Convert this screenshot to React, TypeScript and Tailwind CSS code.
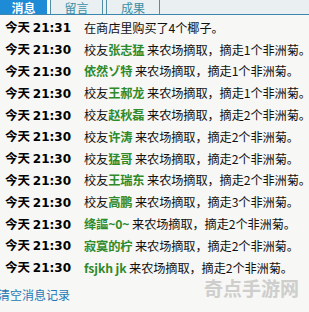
const rows: { time: string; prefix?: string; name?: string; text: string }[] = [
  { time: "21:31", text: "在商店里购买了4个椰子。" },
  { time: "21:30", prefix: "校友", name: "张志猛", text: " 来农场摘取，摘走1个非洲菊。" },
  { time: "21:30", name: "依然ゾ特", text: " 来农场摘取，摘走1个非洲菊。" },
  { time: "21:30", prefix: "校友", name: "王郝龙", text: " 来农场摘取，摘走1个非洲菊。" },
  { time: "21:30", prefix: "校友", name: "赵秋磊", text: " 来农场摘取，摘走2个非洲菊。" },
  { time: "21:30", prefix: "校友", name: "许涛", text: " 来农场摘取，摘走2个非洲菊。" },
  { time: "21:30", prefix: "校友", name: "猛哥", text: " 来农场摘取，摘走2个非洲菊。" },
  { time: "21:30", prefix: "校友", name: "王瑞东", text: " 来农场摘取，摘走2个非洲菊。" },
  { time: "21:30", prefix: "校友", name: "高鹏", text: " 来农场摘取，摘走3个非洲菊。" },
  { time: "21:30", name: "绛謳~0~", text: " 来农场摘取，摘走2个非洲菊。" },
  { time: "21:30", name: "寂寞的柠", text: " 来农场摘取，摘走2个非洲菊。" },
  { time: "21:30", name: "fsjkh jk", text: " 来农场摘取，摘走2个非洲菊。" },
];

const cjk = "font-['Noto_Sans_CJK_SC',sans-serif]";

export default function App() {
  return (
    <div className="relative h-[312px] w-[309px] overflow-hidden bg-[#f7f7f5]">
      {/* tabs */}
      <div className={`flex h-[15px] items-stretch border-b border-[#3d86ad] bg-[#eaf0f1] text-[12px] leading-[13px] ${cjk}`}>
        <div className="flex w-[47px] items-center justify-center bg-[#1d8bd6] font-bold text-white">消息</div>
        <div className="w-[3px] bg-white" />
        <div className="flex w-[53px] items-center justify-center border-l border-r border-[#4f8ea3] text-[#3b8fa6]">留言</div>
        <div className="w-[3px]" />
        <div className="flex w-[54px] items-center justify-center border-l border-r border-[#4f8ea3] text-[#3b8fa6]">成果</div>
        <div className="flex-1" />
      </div>

      {/* messages */}
      <div className="flex flex-col pt-[2px]">
        {rows.map((r, i) => (
          <div key={i} className="flex h-[21.8px] items-center whitespace-nowrap">
            <div className={`w-[84px] shrink-0 pl-[5px] text-[12.5px] font-bold text-black ${cjk}`}>
              今天 <span className="font-['DejaVu_Sans',sans-serif] text-[12px]">{r.time}</span>
            </div>
            <div className={`text-[12.2px] tracking-[-0.1px] text-[#111] ${cjk}`}>
              {r.prefix}
              {r.name && <span className="font-bold text-[#2f8a2a]">{r.name}</span>}
              {r.text}
            </div>
          </div>
        ))}
      </div>

      <div className={`mt-[7px] -ml-[2px] text-[12px] text-[#2277b5] ${cjk}`}>清空消息记录</div>

      {/* watermark */}
      <div className={`absolute left-[204px] top-[276px] text-[19px] font-bold leading-[24px] text-[#c4c4c4] opacity-80 ${cjk}`}>
        奇点手游网
      </div>
    </div>
  );
}
